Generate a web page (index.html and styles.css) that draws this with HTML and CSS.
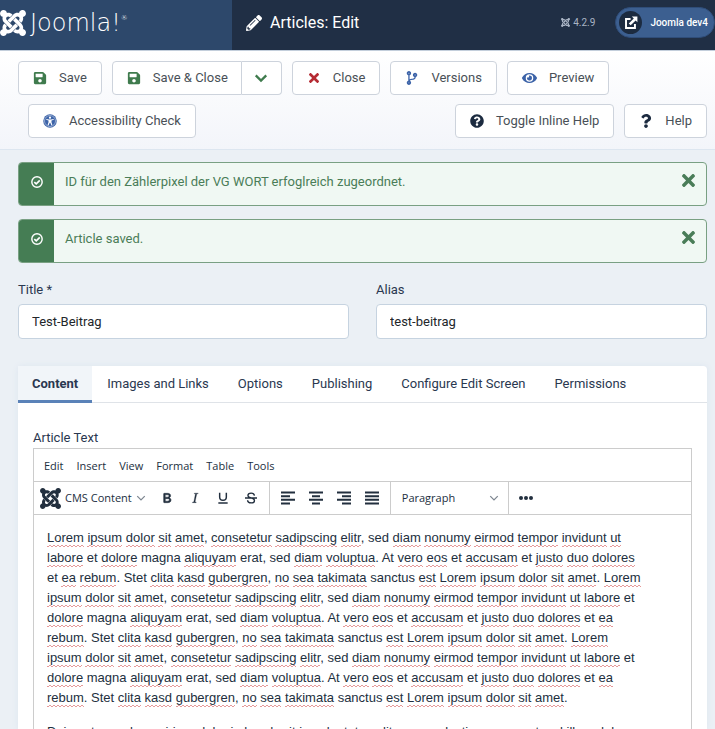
FILE: index.html
```html
<!DOCTYPE html>
<html lang="en">
<head>
<meta charset="utf-8">
<meta name="viewport" content="width=device-width, initial-scale=1">
<title>Articles: Edit</title>
<link rel="stylesheet" href="styles.css">
</head>
<body>
<svg class="sprite" aria-hidden="true">
  <symbol id="joomla" viewBox="0 32 448 448"><path d="M.6 92.1C.6 58.8 27.4 32 60.4 32c30 0 54.5 21.9 59.2 50.2 32.6-7.6 67.1.6 96.5 30l-44.3 44.3c-20.5-20.5-42.6-16.3-55.4-3.5-14.3 14.3-14.3 37.9 0 52.2l99.5 99.5-44 44.3c-87.7-87.2-49.7-49.7-99.8-99.7-26.8-26.5-35-64.8-24.8-98.9C20.4 144.6.6 120.7.6 92.1zm129.5 116.4l44.3 44.3c10-10 89.7-89.7 99.7-99.8 14.3-14.3 37.6-14.3 51.9 0 12.8 12.8 17 35-3.5 55.4l44 44.3c31.2-31.2 38.5-67.6 28.9-101.2 29.2-4.1 51.9-29.2 51.9-59.5 0-33.2-26.8-60.1-59.8-60.1-30.3 0-55.4 22.5-59.5 51.6-33.8-9.9-71.7-1.5-98.3 25.1-18.3 19.1-71.1 71.5-99.6 99.9zm266.3 152.2c8.2-32.7-.9-68.5-26.3-93.9-11.8-12.2 5 4.7-99.5-99.7l-44.3 44.3 99.7 99.7c14.3 14.3 14.3 37.6 0 51.9-12.8 12.8-35 17-55.4-3.5l-44 44.3c27.6 30.2 68 38.8 102.7 28 5.5 27.4 29.7 48.1 58.9 48.1 33 0 59.8-26.8 59.8-60.1 0-30.2-22.5-55-51.6-59.1zm-84.3-53.1l-44-44.3c-87 86.4-50.4 50.4-99.7 99.8-14.3 14.3-37.6 14.3-51.9 0-13.1-13.4-16.9-35.3 3.2-55.4l-44-44.3c-30.2 30.2-38 65.2-29.5 98.3-26.7 6-46.2 29.9-46.2 58.2C0 453.2 26.8 480 59.8 480c28.6 0 52.5-19.8 58.6-46.7 32.7 8.2 68.5-.6 94.2-26 32.1-32 12.2-12.4 99.5-99.7z"/></symbol>
  <symbol id="save" viewBox="0 0 448 512"><path d="M433.941 129.941l-83.882-83.882A48 48 0 0 0 316.118 32H48C21.49 32 0 53.49 0 80v352c0 26.51 21.49 48 48 48h352c26.51 0 48-21.49 48-48V163.882a48 48 0 0 0-14.059-33.941zM224 416c-35.346 0-64-28.654-64-64 0-35.346 28.654-64 64-64s64 28.654 64 64c0 35.346-28.654 64-64 64zm96-304.52V212c0 6.627-5.373 12-12 12H76c-6.627 0-12-5.373-12-12V108c0-6.627 5.373-12 12-12h228.52c3.183 0 6.235 1.264 8.485 3.515l3.48 3.48A11.996 11.996 0 0 1 320 111.48z"/></symbol>
  <symbol id="times" viewBox="0 80 352 352"><path d="M242.72 256l100.07-100.07c12.28-12.28 12.28-32.19 0-44.48l-22.24-22.24c-12.28-12.28-32.19-12.28-44.48 0L176 189.28 75.93 89.21c-12.28-12.28-32.19-12.28-44.48 0L9.21 111.45c-12.28 12.28-12.28 32.19 0 44.48L109.28 256 9.21 356.07c-12.28 12.28-12.28 32.19 0 44.48l22.24 22.24c12.28 12.28 32.2 12.28 44.48 0L176 322.72l100.07 100.07c12.28 12.28 32.2 12.28 44.48 0l22.24-22.24c12.28-12.28 12.28-32.19 0-44.48L242.72 256z"/></symbol>
  <symbol id="eye" viewBox="0 0 576 512"><path d="M572.52 241.4C518.29 135.59 410.93 64 288 64S57.68 135.64 3.48 241.41a32.35 32.35 0 0 0 0 29.19C57.71 376.41 165.07 448 288 448s230.32-71.64 284.52-177.41a32.35 32.35 0 0 0 0-29.19zM288 400a144 144 0 1 1 144-144 143.93 143.93 0 0 1-144 144zm0-240a95.31 95.31 0 0 0-25.31 3.79 47.85 47.85 0 0 1-66.9 66.9A95.78 95.78 0 1 0 288 160z"/></symbol>
  <symbol id="branch" viewBox="0 0 384 512"><path d="M384 144c0-44.2-35.8-80-80-80s-80 35.8-80 80c0 36.4 24.3 67.1 57.5 76.8-.6 16.1-4.2 28.5-11 36.9-15.4 19.2-49.3 22.4-85.2 25.7-28.2 2.6-57.4 5.4-81.3 16.9v-144c32.5-10.2 56-40.5 56-76.3 0-44.2-35.8-80-80-80S0 35.8 0 80c0 35.8 23.5 66.1 56 76.3v199.3C23.5 365.9 0 396.2 0 432c0 44.2 35.8 80 80 80s80-35.8 80-80c0-34-21.2-63.1-51.2-74.6 3.1-5.2 7.8-9.8 14.9-13.4 16.2-8.2 40.4-10.4 66.1-12.8 42.2-3.9 90-8.4 118.2-43.4 14-17.4 21.1-39.8 21.6-67.9 31.6-10.8 54.4-40.7 54.4-75.9zM80 64c8.800 0 16 7.200 16 16s-7.200 16-16 16-16-7.200-16-16 7.200-16 16-16zm0 384c-8.800 0-16-7.200-16-16s7.200-16 16-16 16 7.200 16 16-7.200 16-16 16zm224-320c8.800 0 16 7.200 16 16s-7.200 16-16 16-16-7.200-16-16 7.200-16 16-16z"/></symbol>
  <symbol id="help-circle" viewBox="0 0 512 512"><path d="M504 256c0 136.997-111.043 248-248 248S8 392.997 8 256C8 119.083 119.043 8 256 8s248 111.083 248 248zM262.655 90c-54.497 0-89.255 22.957-116.549 63.758-3.536 5.286-2.353 12.415 2.715 16.258l34.699 26.31c5.205 3.947 12.621 3.008 16.665-2.122 17.864-22.658 30.113-35.797 57.303-35.797 20.429 0 45.698 13.148 45.698 32.958 0 14.976-12.363 22.667-32.534 33.976C247.128 238.528 216 254.941 216 296v4c0 6.627 5.373 12 12 12h56c6.627 0 12-5.373 12-12v-1.333c0-28.462 83.186-29.647 83.186-106.667 0-58.002-60.165-102-116.531-102zM256 338c-25.365 0-46 20.635-46 46 0 25.364 20.635 46 46 46s46-20.636 46-46c0-25.365-20.635-46-46-46z"/></symbol>
  <symbol id="question" viewBox="0 0 384 512"><path d="M202.021 0C122.202 0 70.503 32.703 29.914 91.026c-7.363 10.58-5.093 25.086 5.178 32.874l43.138 32.709c10.373 7.865 25.132 6.026 33.253-4.148 25.049-31.381 43.63-49.449 82.757-49.449 30.764 0 68.816 19.799 68.816 49.631 0 22.552-18.617 34.134-48.993 51.164-35.423 19.86-82.299 44.576-82.299 106.405V320c0 13.255 10.745 24 24 24h72.471c13.255 0 24-10.745 24-24v-5.773c0-42.86 125.268-44.645 125.268-160.627C377.504 66.256 286.902 0 202.021 0zM192 373.459c-38.196 0-69.271 31.075-69.271 69.271 0 38.195 31.075 69.27 69.271 69.27s69.271-31.075 69.271-69.271-31.075-69.27-69.271-69.27z"/></symbol>
  <symbol id="pencil" viewBox="0 0 512 512"><path d="M497.9 142.1l-46.1 46.1c-4.7 4.7-12.3 4.7-17 0l-111-111c-4.7-4.7-4.7-12.3 0-17l46.1-46.1c18.7-18.7 49.1-18.7 67.9 0l60.1 60.1c18.8 18.7 18.8 49.1 0 67.9zM284.2 99.8L21.6 362.4.4 483.9c-2.9 16.4 11.4 30.6 27.8 27.8l121.5-21.3 262.6-262.6c4.7-4.7 4.7-12.3 0-17l-111-111c-4.8-4.7-12.4-4.7-17.1 0zM124.1 339.9c-5.5-5.5-5.5-14.3 0-19.8l154-154c5.5-5.5 14.3-5.5 19.8 0s5.5 14.3 0 19.8l-154 154c-5.5 5.5-14.3 5.5-19.8 0zM88 424h48v36.3l-64.5 11.3-31.1-31.1L51.7 376H88v48z"/></symbol>
  <symbol id="access" viewBox="0 0 16 16"><circle cx="8" cy="8" r="7.700"/><circle cx="8" cy="8" r="6.300" fill="none" stroke="#fff" stroke-width=".5"/><g fill="#fff"><circle cx="8" cy="4.200" r="1.300"/><path d="M3.900 5.600l2.900.7h2.400l2.900-.7.3 1-2.700.8v1.900l1.100 3.500-1.100.4L8.300 9.900h-.6l-1.400 3.300-1.100-.4 1.100-3.500V7.400l-2.700-.8z"/></g></symbol>
  <symbol id="external" viewBox="0 0 16 16"><path d="M7.500 3.500H2.300v10.200h10.200V9" fill="none" stroke="currentColor" stroke-width="2.200"/><path d="M9 .7h6.300V7l-2-2-5.700 5.700-2.100-2.100L11.200 2.900z"/></symbol>
  <symbol id="check" viewBox="0 0 16 16"><g fill="none" stroke="currentColor" stroke-width="1.900"><circle cx="8" cy="8" r="6.900"/><path d="M4.400 8.100l2.600 2.500 4.700-4.700" stroke-width="2.200"/></g></symbol>
  <symbol id="chevron" viewBox="0 0 16 16"><path d="M2 5l6 6 6-6" fill="none" stroke="currentColor" stroke-width="2.600"/></symbol>
  <symbol id="chevron-thin" viewBox="0 0 16 16"><path d="M2 5l6 6 6-6" fill="none" stroke="currentColor" stroke-width="2"/></symbol>
  <symbol id="bold" viewBox="0 0 24 24"><path d="M7.800 19c-.3 0-.5 0-.6-.2l-.2-.5V5.700c0-.2 0-.4.2-.5l.6-.2h5c1.500 0 2.700.3 3.500 1 .7.6 1.100 1.400 1.100 2.500a3 3 0 0 1-.6 1.900c-.4.6-1 1-1.600 1.200.4.1.9.3 1.300.6s.8.7 1 1.200c.4.4.5 1 .5 1.600 0 1.300-.4 2.300-1.300 3-.8.7-2.100 1-3.800 1H7.800zm5-8.300c.6 0 1.200-.1 1.600-.5.4-.3.600-.7.600-1.300 0-1.100-.8-1.700-2.300-1.700H9.300v3.500h3.400zm.5 6c.7 0 1.300-.1 1.700-.4.4-.4.600-.9.600-1.500s-.2-1-.7-1.400c-.4-.3-1-.4-2-.4H9.400v3.800h4z" stroke="currentColor" stroke-width=".8"/></symbol>
  <symbol id="italic" viewBox="0 0 24 24"><path d="M16.700 4.700l-.1.900h-.3c-.6 0-1 0-1.400.3-.3.300-.4.600-.5 1.100l-2.100 9.800v.6c0 .5.400.8 1.400.8h.2l-.2.800H8l.2-.8h.2c1.100 0 1.800-.5 2-1.500l2-9.800.1-.5c0-.6-.4-.8-1.400-.8h-.3l.2-.9h5.800z" stroke="currentColor" stroke-width=".4"/></symbol>
  <symbol id="underline" viewBox="0 0 24 24"><path d="M7 4v6.500c0 3 1.800 5 5 5s5-2 5-5V4M5 19.500h14" fill="none" stroke="currentColor" stroke-width="2.200"/></symbol>
  <symbol id="strike" viewBox="0 0 24 24"><path d="M17.200 8.300C16.800 5.700 15 4.600 12.200 4.600c-3 0-4.800 1.300-4.800 3.500 0 4.600 9.800 2.600 9.800 7.500 0 2.400-2 3.800-5 3.800-3.200 0-5.200-1.400-5.400-4.100M3 12h18" fill="none" stroke="currentColor" stroke-width="2"/></symbol>
  <symbol id="left" viewBox="0 0 16 16"><path d="M1 2.500h14M1 6.200h9M1 9.800h14M1 13.500h9" stroke="currentColor" stroke-width="1.900"/></symbol>
  <symbol id="center" viewBox="0 0 16 16"><path d="M1 2.500h14M4 6.200h8M1 9.800h14M4 13.500h8" stroke="currentColor" stroke-width="1.900"/></symbol>
  <symbol id="right" viewBox="0 0 16 16"><path d="M1 2.500h14M6 6.200h9M1 9.800h14M6 13.500h9" stroke="currentColor" stroke-width="1.900"/></symbol>
  <symbol id="justify" viewBox="0 0 16 16"><path d="M1 2.500h14M1 6.200h14M1 9.800h14M1 13.500h14" stroke="currentColor" stroke-width="1.900"/></symbol>
  <symbol id="more" viewBox="0 0 16 16"><circle cx="3" cy="8" r="2"/><circle cx="8" cy="8" r="2"/><circle cx="13" cy="8" r="2"/></symbol>
</svg>

<div class="shell">
  <header class="header">
    <a class="brand" href="#"><svg class="brand-mark"><use href="#joomla"/></svg><span class="brand-name">Joomla!<sup>®</sup></span></a>
    <div class="header-main">
      <svg class="icon-title"><use href="#pencil"/></svg>
      <h1>Articles: Edit</h1>
      <span class="version"><svg><use href="#joomla"/></svg>4.2.9</span>
      <a class="site" href="#"><span class="site-icon"><svg><use href="#external"/></svg></span>Joomla dev4</a>
    </div>
  </header>

  <div class="toolbar">
    <button class="btn green"><svg><use href="#save"/></svg>Save</button>
    <div class="group">
      <button class="btn green"><svg><use href="#save"/></svg>Save &amp; Close</button>
      <button class="btn green toggle" aria-label="More save options"><svg><use href="#chevron"/></svg></button>
    </div>
    <button class="btn red"><svg><use href="#times"/></svg>Close</button>
    <button class="btn blue"><svg><use href="#branch"/></svg>Versions</button>
    <button class="btn blue"><svg class="wide"><use href="#eye"/></svg>Preview</button>
    <button class="btn blue"><svg><use href="#access"/></svg>Accessibility Check</button>
    <button class="btn dark push"><svg><use href="#help-circle"/></svg>Toggle Inline Help</button>
    <button class="btn dark"><svg><use href="#question"/></svg>Help</button>
  </div>

  <main class="main">
    <div class="alert" role="status">
      <span class="alert-icon"><svg><use href="#check"/></svg></span>
      <p>ID für den Zählerpixel der VG WORT erfoglreich zugeordnet.</p>
      <button aria-label="Close"><svg><use href="#times"/></svg></button>
    </div>
    <div class="alert" role="status">
      <span class="alert-icon"><svg><use href="#check"/></svg></span>
      <p>Article saved.</p>
      <button aria-label="Close"><svg><use href="#times"/></svg></button>
    </div>

    <div class="fields">
      <div class="field"><label for="title">Title *</label><input id="title" type="text" value="Test-Beitrag"></div>
      <div class="field"><label for="alias">Alias</label><input id="alias" type="text" value="test-beitrag"></div>
    </div>

    <section class="card">
      <div class="tabs" role="tablist">
        <button role="tab" aria-selected="true">Content</button>
        <button role="tab">Images and Links</button>
        <button role="tab">Options</button>
        <button role="tab">Publishing</button>
        <button role="tab">Configure Edit Screen</button>
        <button role="tab">Permissions</button>
      </div>
      <div class="panel">
        <div class="panel-label" id="text-label">Article Text</div>
        <div class="editor">
          <div class="menubar">
            <button>Edit</button><button>Insert</button><button>View</button><button>Format</button><button>Table</button><button>Tools</button>
          </div>
          <div class="tools">
            <div class="tool-group">
              <button class="cms"><svg class="cms-mark"><use href="#joomla"/></svg>CMS Content<svg class="caret"><use href="#chevron-thin"/></svg></button>
              <button class="tool" aria-label="Bold"><svg><use href="#bold"/></svg></button>
              <button class="tool" aria-label="Italic"><svg><use href="#italic"/></svg></button>
              <button class="tool" aria-label="Underline"><svg><use href="#underline"/></svg></button>
              <button class="tool" aria-label="Strikethrough"><svg><use href="#strike"/></svg></button>
            </div>
            <div class="tool-group align">
              <button class="tool" aria-label="Align left"><svg><use href="#left"/></svg></button>
              <button class="tool" aria-label="Align center"><svg><use href="#center"/></svg></button>
              <button class="tool" aria-label="Align right"><svg><use href="#right"/></svg></button>
              <button class="tool" aria-label="Justify"><svg><use href="#justify"/></svg></button>
            </div>
            <div class="tool-group">
              <button class="format">Paragraph<svg class="caret"><use href="#chevron-thin"/></svg></button>
            </div>
            <div class="tool-group more">
              <button class="tool" aria-label="More"><svg><use href="#more"/></svg></button>
            </div>
          </div>
          <div class="text" role="textbox" aria-multiline="true" aria-labelledby="text-label">
            <p><u>Lorem</u> <u>ipsum</u> <u>dolor</u> <u>sit</u> <u>amet</u>, <u>consetetur</u> <u>sadipscing</u> <u>elitr</u>, sed <u>diam</u> <u>nonumy</u> <u>eirmod</u> <u>tempor</u> <u>invidunt</u> <u>ut</u> <u>labore</u> et <u>dolore</u> magna <u>aliquyam</u> erat, sed <u>diam</u> <u>voluptua</u>. At <u>vero</u> <u>eos</u> et <u>accusam</u> et <u>justo</u> <u>duo</u> <u>dolores</u> et <u>ea</u> <u>rebum</u>. Stet <u>clita</u> <u>kasd</u> <u>gubergren</u>, <u>no</u> <u>sea</u> <u>takimata</u> sanctus <u>est</u> <u>Lorem</u> <u>ipsum</u> <u>dolor</u> <u>sit</u> <u>amet</u>. <u>Lorem</u> <u>ipsum</u> <u>dolor</u> <u>sit</u> <u>amet</u>, <u>consetetur</u> <u>sadipscing</u> <u>elitr</u>, sed <u>diam</u> <u>nonumy</u> <u>eirmod</u> <u>tempor</u> <u>invidunt</u> <u>ut</u> <u>labore</u> et <u>dolore</u> magna <u>aliquyam</u> erat, sed <u>diam</u> <u>voluptua</u>. At <u>vero</u> <u>eos</u> et <u>accusam</u> et <u>justo</u> <u>duo</u> <u>dolores</u> et <u>ea</u> <u>rebum</u>. Stet <u>clita</u> <u>kasd</u> <u>gubergren</u>, <u>no</u> <u>sea</u> <u>takimata</u> sanctus <u>est</u> <u>Lorem</u> <u>ipsum</u> <u>dolor</u> <u>sit</u> <u>amet</u>. <u>Lorem</u> <u>ipsum</u> <u>dolor</u> <u>sit</u> <u>amet</u>, <u>consetetur</u> <u>sadipscing</u> <u>elitr</u>, sed <u>diam</u> <u>nonumy</u> <u>eirmod</u> <u>tempor</u> <u>invidunt</u> <u>ut</u> <u>labore</u> et <u>dolore</u> magna <u>aliquyam</u> erat, sed <u>diam</u> <u>voluptua</u>. At <u>vero</u> <u>eos</u> et <u>accusam</u> et <u>justo</u> <u>duo</u> <u>dolores</u> et <u>ea</u> <u>rebum</u>. Stet <u>clita</u> <u>kasd</u> <u>gubergren</u>, <u>no</u> <u>sea</u> <u>takimata</u> sanctus <u>est</u> <u>Lorem</u> <u>ipsum</u> <u>dolor</u> <u>sit</u> <u>amet</u>.</p>
            <p>Duis autem vel eum iriure dolor in hendrerit in vulputate velit esse molestie consequat, vel illum dolore</p>
          </div>
        </div>
      </div>
    </section>
  </main>
</div>
</body>
</html>
```
FILE: styles.css
```css
* { box-sizing: border-box; }
body { margin: 0; font-family: Roboto, "Liberation Sans", sans-serif; font-size: 13px; line-height: 20px; color: #2a3850; background: #ebf0f5; }
button, input { font: inherit; color: inherit; margin: 0; }
button { background: none; border: 0; padding: 0; cursor: pointer; white-space: nowrap; }
a { color: inherit; text-decoration: none; }
svg { fill: currentColor; flex: none; }
.sprite { position: absolute; width: 0; height: 0; }
.shell { height: 100vh; overflow: hidden; display: flex; flex-direction: column; }

.header { display: flex; height: 50px; flex: none; color: #fff; background: #202f45; }
.brand { display: flex; align-items: center; gap: 4px; width: 232px; padding-bottom: 4px; background: #2d486b; flex: none; }
.brand-mark { width: 26px; height: 26px; }
.brand-name { font-family: "DejaVu Sans", sans-serif; font-weight: 200; font-size: 24px; line-height: 26px; }
.brand-name sup { font-size: 7px; line-height: 8px; vertical-align: 11px; }
.header-main { flex: 1; min-width: 0; display: flex; align-items: center; padding: 0 0 5px 14px; }
.icon-title { width: 16px; height: 16px; }
h1 { margin: 0 auto 0 8px; font-size: 16px; line-height: 20px; font-weight: 400; white-space: nowrap; }
.version { display: flex; align-items: center; gap: 3px; margin-right: 20px; font-size: 10px; color: #a9b4c4; }
.version svg { width: 9px; height: 9px; }
.site { display: flex; align-items: center; gap: 8px; height: 31px; padding: 0 6px 0 3px; border-radius: 16px; background: #3c5f90; font-size: 10px; font-weight: 500; white-space: nowrap; border: 1px solid #2f4d79; }
.site-icon { display: flex; align-items: center; justify-content: center; width: 23px; height: 23px; border-radius: 50%; background: #1c2b40; }
.site-icon svg { width: 14px; height: 14px; }

.toolbar { display: flex; flex-wrap: wrap; row-gap: 9px; padding: 10px 8px 11px 18px; background: linear-gradient(#fff, #f3f5fa); border-top: 1px solid #c3cedb; border-bottom: 1px solid #dde6f0; flex: none; }
.toolbar > * + * { margin-left: 10px; }
.toolbar > .push { margin-left: auto; }
.btn { display: flex; align-items: center; height: 34px; gap: 12px; padding: 0 14px; border: 1px solid #cdd3dc; border-radius: 4px; background: #fff; color: #495057; }
.btn svg { width: 14px; height: 14px; }
.btn svg.wide { width: 15px; }
.green svg { color: #3f7b4d; }
.red svg { color: #b52b33; padding: 2px; }
.blue svg { color: #3c63a8; }
.dark svg { color: #1c2b40; }
.group { display: flex; }
.group .btn:first-child { padding-right: 13px; border-radius: 4px 0 0 4px; }
.group .toggle { width: 40px; padding: 0; justify-content: center; border-left: 0; border-radius: 0 4px 4px 0; }

.main { flex: 1; min-height: 0; display: flex; flex-direction: column; padding: 12px 8px 0 18px; }
.alert { display: flex; height: 44px; margin-bottom: 13px; border: 1px solid #79a083; border-radius: 4px; background: #f0f8f3; color: #4a7d58; flex: none; overflow: hidden; }
.alert-icon { width: 35px; display: flex; justify-content: center; padding-top: 13px; background: #457d54; color: #fff; }
.alert-icon svg { width: 12px; height: 12px; }
.alert p { flex: 1; margin: 0; padding: 9px 11px; }
.alert button { align-self: flex-start; padding: 11px; line-height: 0; }
.alert button svg { width: 13px; height: 13px; }

.fields { display: grid; grid-template-columns: 1fr 1fr; gap: 27px; padding-top: 4px; flex: none; }
.field { display: flex; flex-direction: column; gap: 4px; }
.field input { width: 100%; height: 35px; padding: 0 13px; border: 1px solid #c6d3e0; border-radius: 4px; background: #fff; color: #22262a; }

.card { flex: 1; min-height: 0; display: flex; flex-direction: column; margin-top: 27px; background: #fff; border-radius: 4px 4px 0 0; box-shadow: 0 0 6px #dce5ef; }
.tabs { display: flex; gap: 1px; height: 37px; border-bottom: 1px solid #dfe3e8; flex: none; }
.tabs button { padding: 2px 14px 0; border-bottom: 3px solid transparent; margin-bottom: -1px; }
.tabs button[aria-selected] { font-weight: 700; background: #f1f5f9; border-bottom-color: #5a82b8; }
.panel { flex: 1; min-height: 0; display: flex; flex-direction: column; padding: 25px 15px 0; }
.editor { flex: 1; min-height: 0; display: flex; flex-direction: column; border: 1px solid #ccc; border-bottom: 0; }
.menubar { display: flex; gap: 13px; height: 33px; padding: 2px 10px 0; border-bottom: 1px solid #ccc; flex: none; }
.menubar, .tools { font-family: "Open Sans", sans-serif; font-size: 11px; color: #222f3e; }
.tools { display: flex; height: 33px; border-bottom: 1px solid #ccc; flex: none; }
.tool-group { display: flex; align-items: center; border-right: 1px solid #ccc; padding-right: 4px; }
.tool-group.align { padding: 0 4px; }
.tool-group.more { border: 0; padding-left: 3px; }
.tool { width: 28px; height: 28px; display: flex; align-items: center; justify-content: center; }
.tool svg { width: 16px; height: 16px; }
.cms { display: flex; align-items: center; gap: 4px; padding: 0 7px 0 6px; }
.cms-mark { width: 21px; height: 21px; }
.caret { width: 10px; height: 10px; color: #7d8690; }
.format { display: flex; align-items: center; justify-content: space-between; width: 113px; padding: 0 5px 0 11px; }
.text { flex: 1; min-height: 0; overflow: hidden; padding: 13px 13px 0; font-family: "Liberation Sans", Arial, sans-serif; color: #222f3e; }
.text p { margin: 0 0 14px; max-width: 596px; }
.text u {
  text-decoration: none;
  padding-bottom: 2px;
  background:
    repeating-linear-gradient(90deg, #e59a9a 0 2px, transparent 2px 4px) 0 100% / 100% 1px no-repeat,
    repeating-linear-gradient(90deg, transparent 0 2px, #e59a9a 2px 4px) 0 calc(100% - 1px) / 100% 1px no-repeat;
}
```
